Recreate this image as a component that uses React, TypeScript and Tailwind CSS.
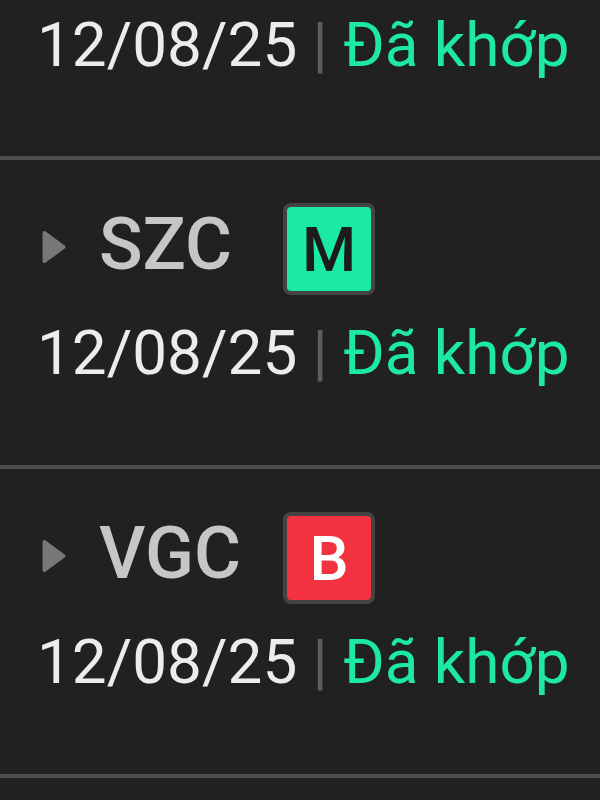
const orders = [
    { id: 2, code: "SZC", side: "M" },
    { id: 3, code: "VGC", side: "B" },
];

function Caret() {
    return (
        <svg width="25" height="44" viewBox="0 0 25 44" className="mb-[4px] shrink-0">
            <path
                d="M2.5 8 L21.5 22 L2.5 36 Z"
                fill="#777777"
                stroke="#777777"
                strokeWidth="4"
                strokeLinejoin="round"
            />
        </svg>
    );
}

function SideBadge({ side }: { side: string }) {
    const buy = side === "M";
    return (
        <div className="rounded-[8px] bg-[#444444] p-[4px]">
            <div
                className={`flex h-[84px] w-[84px] items-center justify-center rounded-[4px] text-[62px] font-medium leading-none ${
                    buy ? "bg-[#1be9a6] text-[#1c1c1c]" : "bg-[#f3323f] text-white"
                }`}
            >
                <span className="mt-[2px]">{side}</span>
            </div>
        </div>
    );
}

function StatusLine({ className = "" }: { className?: string }) {
    return (
        <p className={`whitespace-nowrap pl-[37px] text-[62px] leading-[73px] text-[#ececec] ${className}`}>
            12/08/25 <span className="text-[#5e5e5e]">|</span>{" "}
            <span className="text-[#1de8a6]">Đã khớp</span>
        </p>
    );
}

function OrderRow({ code, side }: { code: string; side: string }) {
    return (
        <div className="border-b-4 border-[#4e4e4e] pb-[76px] pt-[43px]">
            <div className="flex h-[92px] items-center pl-[42px]">
                <Caret />
                <span className="ml-[32px] mb-[8px] w-[184px] text-[72px] font-medium leading-none text-[#c6c6c6]">
                    {code}
                </span>
                <SideBadge side={side} />
            </div>

            <StatusLine className="mt-[21px]" />
        </div>
    );
}

export default function App() {
    return (
        <div className="h-[800px] w-[600px] overflow-hidden bg-[#212121] font-['Roboto',sans-serif]">
            {/* tail of the row scrolled above */}
            <div className="border-b-4 border-[#4e4e4e] pb-[75px] pt-[8px]">
                <StatusLine />
            </div>

            {orders.map(order => (
                <OrderRow key={order.id} code={order.code} side={order.side} />
            ))}
        </div>
    );
}
